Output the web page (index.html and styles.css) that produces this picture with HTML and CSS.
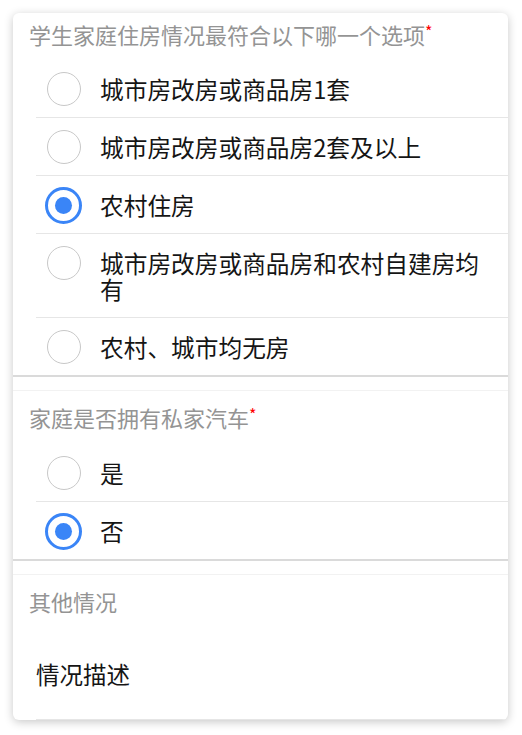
FILE: index.html
```html
<!DOCTYPE html>
<html lang="zh-CN">
<head>
  <meta charset="UTF-8" />
  <meta name="viewport" content="width=device-width, initial-scale=1.0"/>
  <title>学生家庭情况调查</title>
  <link rel="stylesheet" href="styles.css">
</head>
<body>
  <div class="card">
    <section class="group first">
      <div class="group-title">学生家庭住房情况最符合以下哪一个选项<span class="req">*</span></div>
      <label class="option"><span class="radio"></span><span class="text">城市房改房或商品房1套</span></label>
      <label class="option"><span class="radio"></span><span class="text">城市房改房或商品房2套及以上</span></label>
      <label class="option"><span class="radio checked"></span><span class="text">农村住房</span></label>
      <label class="option"><span class="radio"></span><span class="text">城市房改房或商品房和农村自建房均有</span></label>
      <label class="option"><span class="radio"></span><span class="text">农村、城市均无房</span></label>
    </section>

    <section class="group">
      <div class="group-title">家庭是否拥有私家汽车<span class="req">*</span></div>
      <label class="option"><span class="radio"></span><span class="text">是</span></label>
      <label class="option"><span class="radio checked"></span><span class="text">否</span></label>
    </section>

    <section class="group last">
      <div class="group-title">其他情况</div>
      <div class="field">情况描述</div>
    </section>
  </div>
</body>
</html>
```

FILE: styles.css
```css
body, html {
  margin: 0;
  padding: 0;
  background: #fff;
  font-family: "Noto Sans CJK SC", "Noto Sans", sans-serif;
}

body {
  padding: 13px 14px 15px 13px;
}

.card {
  background: #fff;
  border-radius: 6px;
  box-shadow: 0 2px 10px rgba(0, 0, 0, 0.22);
  overflow: hidden;
}

/* Sections */
.group {
  border-bottom: 2px solid #dadada;
}

.group::before {
  content: "";
  display: block;
  height: 13px;
  border-bottom: 1px solid #f2f2f2;
}

.group.first::before {
  display: none;
}

.group.last {
  border-bottom: none;
}

.group-title {
  padding: 13px 16px 13px;
  font-size: 22px;
  line-height: 27px;
  color: #949494;
}

.group.first .group-title {
  padding: 8px 16px 12px;
}

.req {
  color: #f00;
  font-size: 16px;
  line-height: 14px;
  vertical-align: top;
  position: relative;
  top: 3px;
}

/* Options */
.option {
  display: flex;
  align-items: flex-start;
  gap: 19px;
  margin-left: 23px;
  padding: 16px 16px 15px 11px;
  border-bottom: 1px solid #e6e6e6;
  cursor: pointer;
}

.option:last-child {
  border-bottom: none;
}

.radio {
  flex: none;
  box-sizing: border-box;
  width: 34px;
  height: 34px;
  margin: -4px 0;
  border: 1.5px solid #c8c8c8;
  border-radius: 50%;
  display: flex;
  justify-content: center;
  align-items: center;
}

.radio.checked {
  width: 37px;
  height: 37px;
  margin: -5px -1px -6px -2px;
  border: 3px solid #3a85f7;
}

.radio.checked::after {
  content: "";
  width: 17px;
  height: 17px;
  border-radius: 50%;
  background: #3a85f7;
}

.text {
  font-size: 23.7px;
  line-height: 26px;
  color: #151515;
}

/* Free text */
.field {
  margin-left: 23px;
  padding: 33px 0 32px;
  font-size: 23.5px;
  line-height: 26px;
  color: #151515;
  border-bottom: 1px solid #e6e6e6;
}
```
